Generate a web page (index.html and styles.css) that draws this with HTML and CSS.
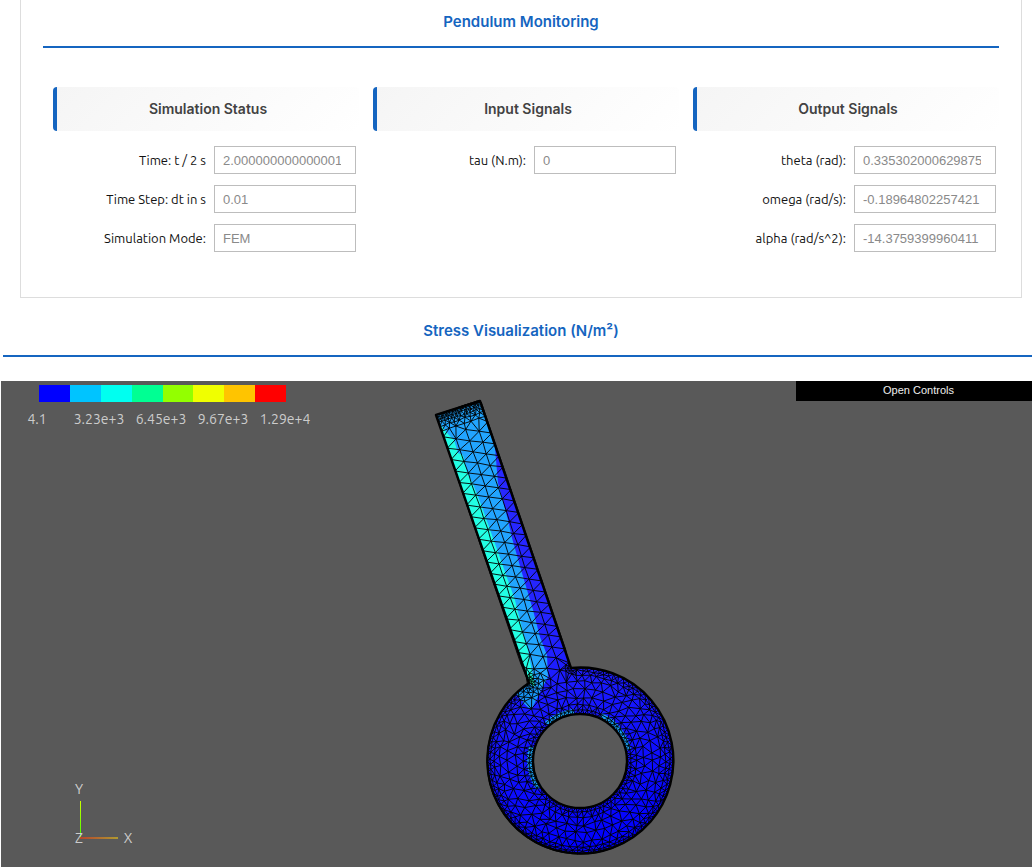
FILE: index.html
```html
<!DOCTYPE html>
<html lang="en">
<head>
<meta charset="utf-8">
<meta name="viewport" content="width=device-width, initial-scale=1">
<title>Pendulum Monitoring</title>
<link rel="stylesheet" href="styles.css">
</head>
<body>
<section class="panel">
  <h2 class="title">Pendulum Monitoring</h2>
  <div class="columns">
    <div class="group">
      <h3 class="group-title">Simulation Status</h3>
      <div class="fields">
        <label for="time">Time: t / 2 s</label><input id="time" type="text" value="2.000000000000001" disabled>
        <label for="step">Time Step: dt in s</label><input id="step" type="text" value="0.01" disabled>
        <label for="mode">Simulation Mode:</label><input id="mode" type="text" value="FEM" disabled>
      </div>
    </div>
    <div class="group">
      <h3 class="group-title">Input Signals</h3>
      <div class="fields">
        <label for="tau">tau (N.m):</label><input id="tau" type="text" value="0" disabled>
      </div>
    </div>
    <div class="group">
      <h3 class="group-title">Output Signals</h3>
      <div class="fields">
        <label for="theta">theta (rad):</label><input id="theta" type="text" value="0.335302000629875" disabled>
        <label for="omega">omega (rad/s):</label><input id="omega" type="text" value="-0.18964802257421" disabled>
        <label for="alpha">alpha (rad/s^2):</label><input id="alpha" type="text" value="-14.3759399960411" disabled>
      </div>
    </div>
  </div>
</section>

<section class="visual">
  <h2 class="title title-wide">Stress Visualization (N/m²)</h2>
  <div class="viewer">
    <svg class="scene" viewBox="1 381 1040 486" role="img" aria-label="Stress mesh of the pendulum">
      <defs>
        <linearGradient id="stress" gradientUnits="userSpaceOnUse" x1="470" y1="400" x2="580" y2="855">
          <stop offset="0" stop-color="#2a2aff"/><stop offset=".5" stop-color="#2424ff"/><stop offset=".8" stop-color="#1010ff"/><stop offset="1" stop-color="#0000ff"/>
        </linearGradient>
        <linearGradient id="xaxis" gradientUnits="userSpaceOnUse" x1="80" y1="0" x2="118" y2="0">
          <stop offset="0" stop-color="#b5442c"/><stop offset="1" stop-color="#b09a30"/>
        </linearGradient>
        <linearGradient id="yaxis" gradientUnits="userSpaceOnUse" x1="0" y1="838" x2="0" y2="801">
          <stop offset="0" stop-color="#40ff00"/><stop offset="1" stop-color="#d0ff00"/>
        </linearGradient>
        <clipPath id="bar"><path d="M436 415L480 401L572 670L560 725H515L529 683Z"/></clipPath>
      </defs>
      <path fill="url(#stress)" fill-rule="evenodd" d="M436 415L480 401L571 668A93 93 0 1 1 529 683ZM627 761A47 47 0 1 0 533 761A47 47 0 1 0 627 761Z"/>
      <g clip-path="url(#bar)">
        <path fill="#22a5ff" d="M430 412L482 396L492 432L495 448L498 483L508 520L512 538L522 573L533 610L540 637L547 655L548 677L540 692L531 710L517 697L529 683Z"/>
        <path fill="#22ffe4" d="M436 423L440 424L448 434L454 440L458 453L463 455L467 472L473 484L482 507L493 538L504 569L515 600L522 628L528 650L532 672L535 684L530 690L526 683Z"/>
        <path fill="#20e8a0" d="M528 674L533 678L534 687L529 687Z"/>
      </g>
      <path fill="#1794f5" d="M516 694L529 683L540 692L531 710Z"/>
      <g fill="none" stroke="#18a0f5" stroke-width="6">
        <path d="M547 724A49 49 0 0 1 574 712"/>
        <path d="M601 716A49 49 0 0 1 628 750"/>
        <path d="M532 747A49 49 0 0 0 539 788"/>
      </g>
      <path id="mesh" fill="none" stroke="#000" stroke-width="1" stroke-opacity=".9"/>
      <g fill="none" stroke="#000" stroke-width="2.4" stroke-linejoin="round">
        <path d="M436 415L480 401L571 668A93 93 0 1 1 529 683Z"/>
        <circle cx="580" cy="761" r="47"/>
      </g>
      <path stroke="url(#yaxis)" stroke-width="1" d="M80.500 838L80.501 801"/>
      <rect x="80" y="837" width="38" height="2" fill="url(#xaxis)"/>
      <g class="axis-label">
        <text x="79" y="794">Y</text><text x="79" y="843">Z</text><text x="128" y="843">X</text>
      </g>
    </svg>
    <div class="legend">
      <div class="swatches"><i class="c1"></i><i class="c2"></i><i class="c3"></i><i class="c4"></i><i class="c5"></i><i class="c6"></i><i class="c7"></i><i class="c8"></i></div>
      <div class="scale"><span>4.1</span><span>3.23e+3</span><span>6.45e+3</span><span>9.67e+3</span><span>1.29e+4</span></div>
    </div>
    <button class="controls" type="button">Open Controls</button>
  </div>
</section>
<script src="mesh.js"></script>
</body>
</html>
```
FILE: styles.css
```css
* { box-sizing: border-box; }
body {
  margin: 0;
  min-height: 100vh;
  display: flex;
  flex-direction: column;
  overflow-x: hidden;
  background: #fff;
  font-family: Ubuntu, "Noto Sans", sans-serif;
}
.panel {
  margin: 0 10px 0 20px;
  padding: 0 22px 45px;
  border: 1px solid #ddd;
  border-top: 0;
}
.title {
  margin: 0;
  padding: 12px 0 15px;
  border-bottom: 2px solid #1565c0;
  color: #1565c0;
  font: 600 15px/19px Inter, sans-serif;
  text-align: center;
}
.columns {
  display: grid;
  grid-template-columns: repeat(3, 1fr);
  gap: 14px;
  padding: 39px 0 0 10px;
}
.group-title {
  margin: 0 0 15px;
  padding: 12px;
  border-left: 4px solid #1565c0;
  border-radius: 4px;
  background: linear-gradient(135deg, #f5f5f5, #fff);
  color: #424242;
  font: 600 14px/20px Inter, sans-serif;
  text-align: center;
}
.fields {
  display: grid;
  grid-template-columns: 1fr 142px;
  gap: 11px 8px;
  align-items: center;
  padding-right: 3px;
}
.fields label {
  color: #111;
  font-size: 13px;
  line-height: 18px;
  text-align: right;
}
.fields input {
  width: 100%;
  height: 28px;
  padding: 0 14px 0 8px;
  border: 1px solid #bdbdbd;
  border-radius: 0;
  background: #fff;
  color: #8a8a8a;
  font: 13px "Liberation Sans", Arial, sans-serif;
}
.visual {
  flex: 1;
  display: flex;
  flex-direction: column;
  margin: 0 -9px 0 1px;
}
.title-wide {
  margin: 11px 2px 24px;
}
.viewer {
  position: relative;
  flex: 1;
  display: flex;
  background: #595959;
  overflow: hidden;
}
.scene {
  display: block;
  width: 100%;
  height: auto;
}
.axis-label {
  fill: #ccc;
  font-size: 14px;
  text-anchor: middle;
}
.legend {
  position: absolute;
  top: 4px;
  left: 5px;
  width: 310px;
}
.swatches {
  display: flex;
  height: 17px;
  margin: 0 30px 0 33px;
}
.swatches i { flex: 1; }
.c1 { background: #0000ff; }
.c2 { background: #00c4ff; }
.c3 { background: #00fff0; }
.c4 { background: #00ff93; }
.c5 { background: #93ff00; }
.c6 { background: #f0ff00; }
.c7 { background: #ffc400; }
.c8 { background: #ff0000; }
.scale {
  display: grid;
  grid-template-columns: repeat(5, 1fr);
  margin-top: 8px;
  color: #ccc;
  font-size: 14px;
  line-height: 18px;
  text-align: center;
}
.controls {
  position: absolute;
  top: 0;
  right: 0;
  width: 245px;
  height: 20px;
  padding: 0 0 1px;
  border: 0;
  background: #000;
  color: #eee;
  font: 11px/19px "Liberation Sans", Arial, sans-serif;
  text-align: center;
}
```
FILE: mesh.js
```js
(function () {
  // Pendulum geometry: slanted rod joined to a ring.
  var cx = 580, cy = 761, inner = 47, outer = 93;
  var ox = 436, oy = 415, ax = 0.3227, ay = 0.9465, width = 47, length = 283;
  var seed = 7, points = [];

  function random() {
    seed = (seed * 16807) % 2147483647;
    return seed / 2147483647 - 0.5;
  }
  function toPage(u, v) { return [ox + u * ay + v * ax, oy - u * ax + v * ay]; }
  function toRod(x, y) {
    var dx = x - ox, dy = y - oy;
    return [dx * ay - dy * ax, dx * ax + dy * ay];
  }
  function radius(x, y) { return Math.hypot(x - cx, y - cy); }
  function inRod(x, y, pad) {
    var r = toRod(x, y);
    return r[0] >= -pad && r[0] <= width + pad && r[1] >= -pad && r[1] < 305;
  }
  function add(x, y, gap) {
    for (var i = 0; i < points.length; i++) {
      if (Math.hypot(points[i][0] - x, points[i][1] - y) < gap) return;
    }
    points.push([x, y]);
  }

  // Dense rows at the clamped end.
  [[0, 22], [2.4, 22], [4.8, 20], [8, 14], [12, 9], [17, 6]].forEach(function (row, k) {
    for (var i = 0; i <= row[1]; i++) {
      var edge = i === 0 || i === row[1];
      var p = toPage(i * width / row[1] + (edge ? 0 : random() * 1.6), row[0] + (k ? random() * 1.4 : 0));
      add(p[0], p[1], 1.5);
    }
  });
  // Graded points at both rod-to-ring corners.
  [[529, 683], [571, 668]].forEach(function (c, k) {
    [[0, 1], [3, 7], [6, 11], [10, 12], [15, 12]].slice(0, k ? 3 : 5).forEach(function (s) {
      for (var i = 0; i < s[1]; i++) {
        var a = i / s[1] * 6.283 + s[0];
        var x = c[0] + s[0] * Math.cos(a), y = c[1] + s[0] * Math.sin(a);
        if (inRod(x, y, -0.8) || radius(x, y) < outer - 1) add(x, y, 2);
      }
    });
  });
  // Ring layers, fine at both edges and coarse between.
  [[47, 72], [51, 72], [56.5, 50], [64, 44], [72, 46], [80, 56], [86, 78], [89.8, 104], [93, 110]].forEach(function (s, k) {
    for (var i = 0; i < s[1]; i++) {
      var edge = k === 0 || k === 8;
      var a = (i + (k % 2) / 2 + (edge ? 0 : random() * 0.4)) / s[1] * Math.PI * 2;
      var r = s[0] + (edge ? 0 : random() * (k > 2 && k < 6 ? 3 : 1));
      var x = cx + r * Math.cos(a), y = cy + r * Math.sin(a);
      if (k > 5 && inRod(x, y, -1)) continue;
      add(x, y, 3);
    }
  });
  // Regular staggered rows down the rod.
  for (var c = 0; c < 5; c++) {
    for (var v = 23 + (c % 2) * 6; v < 305; v += 12) {
      var side = c === 0 || c === 4;
      var q = toPage(c * width / 4 + (side ? 0 : random()), v + random());
      if (side && v > length) continue;
      if (radius(q[0], q[1]) > 84) add(q[0], q[1], 5);
    }
  }

  // Incremental Delaunay triangulation.
  function circle(a, b, d) {
    var A = points[a], B = points[b], C = points[d];
    var D = 2 * (A[0] * (B[1] - C[1]) + B[0] * (C[1] - A[1]) + C[0] * (A[1] - B[1]));
    var sa = A[0] * A[0] + A[1] * A[1], sb = B[0] * B[0] + B[1] * B[1], sc = C[0] * C[0] + C[1] * C[1];
    var x = (sa * (B[1] - C[1]) + sb * (C[1] - A[1]) + sc * (A[1] - B[1])) / D;
    var y = (sa * (C[0] - B[0]) + sb * (A[0] - C[0]) + sc * (B[0] - A[0])) / D;
    return { v: [a, b, d], x: x, y: y, r: Math.hypot(A[0] - x, A[1] - y) };
  }
  var n = points.length;
  points.forEach(function (p) { p[0] += random() * 0.01; p[1] += random() * 0.01; });
  points.push([-9000, -8000], [9500, -7000], [300, 12000]);
  var triangles = [circle(n, n + 1, n + 2)];
  for (var i = 0; i < n; i++) {
    var edges = {}, keep = [];
    triangles.forEach(function (t) {
      if (Math.hypot(points[i][0] - t.x, points[i][1] - t.y) < t.r) {
        for (var e = 0; e < 3; e++) {
          var s = Math.min(t.v[e], t.v[(e + 1) % 3]), m = Math.max(t.v[e], t.v[(e + 1) % 3]);
          var key = s + "," + m;
          if (edges[key]) delete edges[key]; else edges[key] = [s, m];
        }
      } else keep.push(t);
    });
    Object.keys(edges).forEach(function (key) { keep.push(circle(edges[key][0], edges[key][1], i)); });
    triangles = keep;
  }

  var drawn = {}, path = "";
  triangles.forEach(function (t) {
    if (Math.max.apply(null, t.v) >= n) return;
    var x = 0, y = 0;
    t.v.forEach(function (k) { x += points[k][0] / 3; y += points[k][1] / 3; });
    var r = radius(x, y);
    if (r < inner || (r > outer && !inRod(x, y, 0))) return;
    for (var e = 0; e < 3; e++) {
      var a = Math.min(t.v[e], t.v[(e + 1) % 3]), b = Math.max(t.v[e], t.v[(e + 1) % 3]);
      if (drawn[a + "," + b]) continue;
      drawn[a + "," + b] = true;
      path += "M" + points[a][0].toFixed(1) + " " + points[a][1].toFixed(1) + "L" + points[b][0].toFixed(1) + " " + points[b][1].toFixed(1);
    }
  });
  document.getElementById("mesh").setAttribute("d", path);
})();
```
